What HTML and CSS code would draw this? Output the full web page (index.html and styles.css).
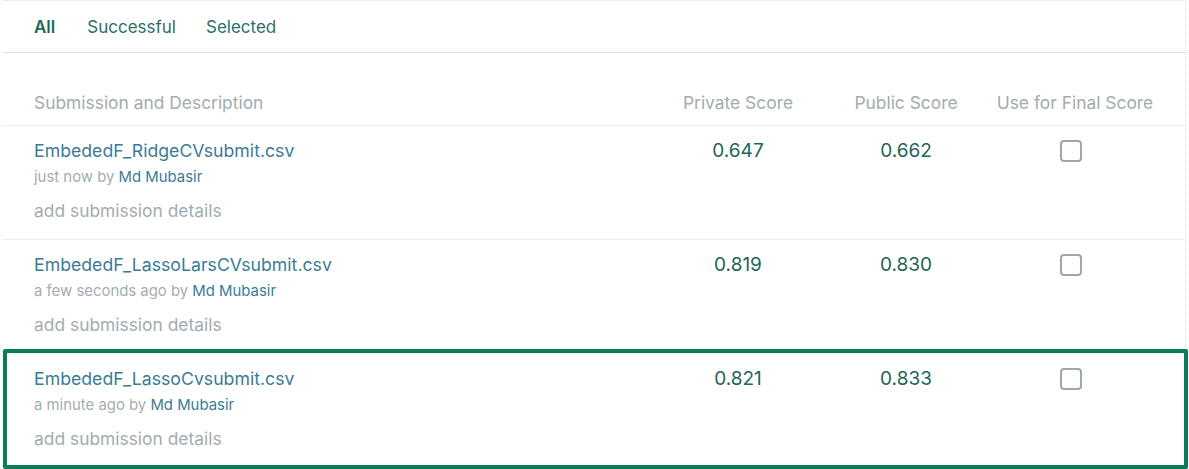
FILE: index.html
```html
<!DOCTYPE html>
<html>
<head>
<meta charset="utf-8">
<link rel="stylesheet" href="styles.css">
</head>
<body>
<div class="card">
  <nav class="tabs">
    <span class="tab active">All</span>
    <span class="tab">Successful</span>
    <span class="tab">Selected</span>
  </nav>
  <div class="table">
    <div class="row head">
      <div class="c-desc">Submission and Description</div>
      <div class="c-num">Private Score</div>
      <div class="c-num">Public Score</div>
      <div class="c-num">Use for Final Score</div>
    </div>
    <div class="row">
      <div class="c-desc">
        <div class="fname">EmbededF_RidgeCVsubmit.csv</div>
        <div class="meta">just now by <span class="user">Md Mubasir</span></div>
        <div class="details">add submission details</div>
      </div>
      <div class="c-num score">0.647</div>
      <div class="c-num score">0.662</div>
      <div class="c-num"><span class="check"></span></div>
    </div>
    <div class="row">
      <div class="c-desc">
        <div class="fname">EmbededF_LassoLarsCVsubmit.csv</div>
        <div class="meta">a few seconds ago by <span class="user">Md Mubasir</span></div>
        <div class="details">add submission details</div>
      </div>
      <div class="c-num score">0.819</div>
      <div class="c-num score">0.830</div>
      <div class="c-num"><span class="check"></span></div>
    </div>
    <div class="row last highlighted">
      <div class="c-desc">
        <div class="fname">EmbededF_LassoCvsubmit.csv</div>
        <div class="meta">a minute ago by <span class="user">Md Mubasir</span></div>
        <div class="details">add submission details</div>
      </div>
      <div class="c-num score">0.821</div>
      <div class="c-num score">0.833</div>
      <div class="c-num"><span class="check"></span></div>
      <div class="highlight-box"></div>
    </div>
  </div>
</div>
</body>
</html>
```

FILE: styles.css
```css
html, body {
  margin: 0;
  padding: 0;
  background: #ffffff;
}
body {
  font-family: Inter, "Noto Sans", sans-serif;
  width: 1189px;
  height: 469px;
  overflow: hidden;
}
.card {
  margin-left: 3px;
  width: 1183px;
  border-top: 1px dotted #d8dfe2;
  border-right: 1px dotted #d8dfe2;
  box-sizing: border-box;
  height: 469px;
}
.tabs {
  display: flex;
  align-items: center;
  height: 51px;
  padding-left: 31px;
  border-bottom: 1px solid #dce3e6;
}
.tab {
  font-size: 17px;
  color: #2c6f69;
  margin-right: 30px;
  line-height: 24px;
  margin-top: 1px;
}
.tab.active {
  font-weight: 600;
  color: #1c6a55;
  margin-right: 32px;
}
.row {
  display: grid;
  grid-template-columns: 1fr 170px 166px 172px;
  padding-left: 31px;
  padding-right: 24px;
  border-bottom: 1px solid #e4f3f5;
  position: relative;
}
.row.last {
  border-bottom: none;
}
.row.head {
  padding-top: 38px;
  padding-bottom: 10px;
  font-size: 17.4px;
  line-height: 24px;
  color: #a2acb1;
}
.row.head .c-num {
  display: block;
  text-align: center;
  white-space: nowrap;
}
.row:not(.head) {
  padding-top: 13px;
  padding-bottom: 14px;
  height: 86px;
}
.c-num {
  text-align: center;
  display: flex;
  justify-content: center;
  align-items: flex-start;
}
.fname {
  font-size: 17.7px;
  line-height: 24px;
  color: #3a7c95;
}
.meta {
  font-size: 14.9px;
  line-height: 18px;
  margin-top: 5px;
  color: #a4adb2;
}
.user {
  color: #3a7c95;
}
.details {
  font-size: 17.4px;
  line-height: 24px;
  margin-top: 13px;
  color: #a2acb1;
}
.score {
  font-size: 19px;
  line-height: 24px;
  color: #1e6459;
}
.check {
  display: block;
  width: 18px;
  height: 18px;
  margin-top: 1px;
  margin-right: 8px;
  border: 2px solid #9ea7ad;
  border-radius: 4px;
}
.highlight-box {
  position: absolute;
  left: 0;
  top: -5px;
  width: 1185px;
  height: 120px;
  border: 4px solid #0a7d55;
  box-sizing: border-box;
  border-radius: 2px;
  pointer-events: none;
}
```
